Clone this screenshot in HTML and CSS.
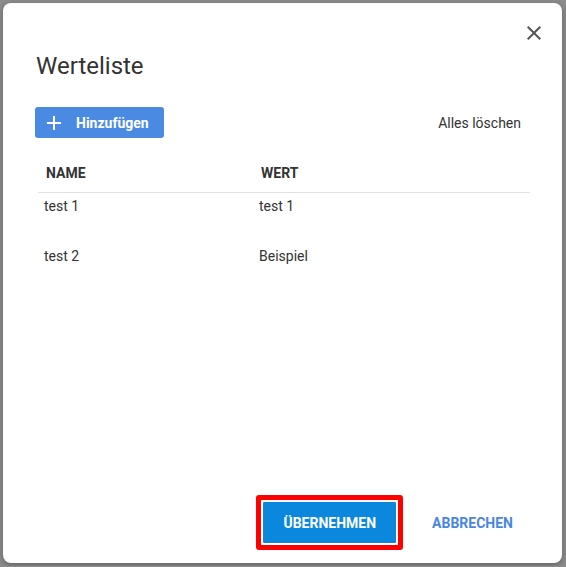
FILE: index.html
```html
<!DOCTYPE html>
<html lang="de">
<head>
    <meta charset="UTF-8">
    <meta name="viewport" content="width=device-width, initial-scale=1.0">
    <title>Werteliste</title>
    <link rel="stylesheet" href="styles.css">
</head>
<body>
    <div class="dialog">
        <button class="close" title="Schließen">
            <svg width="24" height="24" viewBox="0 0 24 24"><path d="M19 6.41L17.59 5 12 10.59 6.41 5 5 6.41 10.59 12 5 17.59 6.41 19 12 13.41 17.59 19 19 17.59 13.41 12z"/></svg>
        </button>

        <h1 class="title">Werteliste</h1>

        <div class="toolbar">
            <button class="btn-add">
                <svg width="24" height="24" viewBox="0 0 24 24"><path d="M19 13h-6v6h-2v-6H5v-2h6V5h2v6h6v2z"/></svg>
                Hinzufügen
            </button>
            <button class="btn-text">Alles löschen</button>
        </div>

        <div class="table">
            <div class="row head">
                <div class="cell">NAME</div>
                <div class="cell">WERT</div>
            </div>
            <div class="row">
                <div class="cell">test 1</div>
                <div class="cell">test 1</div>
            </div>
            <div class="row">
                <div class="cell">test 2</div>
                <div class="cell">Beispiel</div>
            </div>
        </div>

        <div class="footer">
            <div class="focus-ring">
                <button class="btn-primary">ÜBERNEHMEN</button>
            </div>
            <button class="btn-flat">ABBRECHEN</button>
        </div>
    </div>
</body>
</html>
```

FILE: styles.css
```css
body {
    margin: 0;
    background-color: #8c8c8c;
    font-family: Roboto, "Noto Sans", sans-serif;
    color: #333;
}
button {
    font-family: inherit;
    border: none;
    background: none;
    cursor: pointer;
    padding: 0;
}
.dialog {
    position: relative;
    box-sizing: border-box;
    width: 559px;
    height: 560px;
    margin: 3px;
    padding-top: 47px;
    background: white;
    border-radius: 8px;
    box-shadow: 0 2px 6px rgba(0,0,0,0.3);
    display: flex;
    flex-direction: column;
}
.close {
    position: absolute;
    top: 18px;
    right: 16px;
    width: 24px;
    height: 24px;
    fill: #555;
}
.close svg {
    display: block;
}
.title {
    margin: 0;
    padding: 0 33px;
    font-size: 24px;
    line-height: 32px;
    font-weight: 400;
    color: #333;
}
.toolbar {
    display: flex;
    justify-content: space-between;
    align-items: center;
    margin: 25px 41px 15px 32px;
}
.btn-add {
    display: flex;
    align-items: center;
    gap: 10px;
    height: 31px;
    padding: 0 15px 0 7px;
    background-color: #4a8ae2;
    color: white;
    border-radius: 3px;
    font-size: 14px;
    font-weight: 700;
    fill: white;
}
.btn-add svg {
    display: block;
}
.btn-text {
    font-size: 14px;
    color: #333;
}
.table {
    margin: 0 32px 0 35px;
}
.row {
    display: flex;
    height: 50px;
    padding-top: 5px;
    box-sizing: border-box;
    font-size: 14px;
    line-height: 16px;
}
.row .cell {
    padding-left: 6px;
}
.row .cell:first-child {
    width: 215px;
    box-sizing: border-box;
}
.row.head {
    height: 40px;
    padding-top: 0;
    align-items: center;
    border-bottom: 1px solid #e2e2e2;
    font-weight: 700;
}
.row.head .cell {
    padding-left: 8px;
}
.footer {
    margin-top: auto;
    display: flex;
    justify-content: flex-end;
    align-items: center;
    gap: 13px;
    padding: 0 33px 13px 0;
}
.focus-ring {
    display: flex;
    padding: 2px;
    border: 5px solid #ff0000;
    border-radius: 3px;
    background: white;
}
.btn-primary {
    height: 41px;
    padding: 0 20px;
    background-color: #0b88dd;
    color: white;
    font-size: 14px;
    font-weight: 700;
    border-radius: 1px;
}
.btn-flat {
    height: 41px;
    padding: 0 16px;
    color: #4a86e0;
    font-size: 14px;
    font-weight: 700;
}
```
